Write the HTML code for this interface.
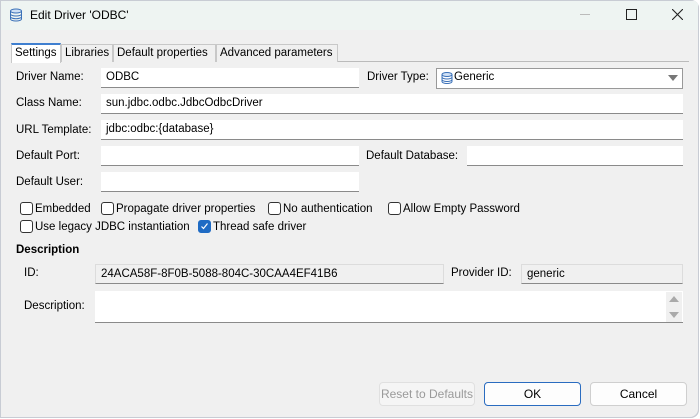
<!DOCTYPE html>
<html><head><meta charset="utf-8"><style>
*{box-sizing:border-box;margin:0;padding:0}
body{width:700px;height:419px;overflow:hidden;background:#fff;font-family:"Liberation Sans",sans-serif;font-size:11.5px;color:#000;position:relative}
.win{position:absolute;left:0;top:0;width:699px;height:418px;background:#f0f0f0;box-shadow:inset -1px -1px 0 #c8ccd4, inset 1px 1px 0 #c8ccd4;border-radius:0 8px 8px 0;overflow:hidden}
.title{position:absolute;left:1px;top:1px;width:697px;height:29px;background:#eef4f2}
.a{position:absolute;white-space:nowrap}
.in{position:absolute;background:#fff;border-bottom:1px solid #8a8a8a;height:20px}
.ro{position:absolute;background:#f0f0f0;border:1px solid #dcdcdc;border-bottom:1px solid #8a8a8a;height:20px;padding:3px 0 0 5px}
.tx{padding:3px 0 0 5px}
.cb{position:absolute;width:13px;height:13px;border:1px solid #333;border-radius:3px;background:#fff}
.tab{position:absolute;top:44px;height:18px;border:1px solid #c8c8c8;border-bottom:none;padding:2px 0 0 3px}
.btn{position:absolute;top:382px;height:24px;border:1px solid #cfcfcf;border-radius:4px;background:#fdfdfd;text-align:center;padding-top:4px;font-size:12px}
</style></head><body>
<div class="win">
<div class="title"></div>
<svg class="a" style="left:9px;top:8px" width="14" height="14" viewBox="0 0 14 14"><ellipse cx="7" cy="3" rx="5.5" ry="2" fill="#cfe0f5" stroke="#3a70b8"/><path d="M1.5 3v8c0 1.1 2.5 2 5.5 2s5.5-.9 5.5-2V3M1.5 6c0 1.1 2.5 2 5.5 2s5.5-.9 5.5-2M1.5 8.7c0 1.1 2.5 2 5.5 2s5.5-.9 5.5-2" fill="none" stroke="#3a70b8"/></svg>
<div class="a" style="left:30px;top:8px;font-size:12px">Edit Driver 'ODBC'</div>
<div class="a" style="left:580px;top:14px;width:10px;height:1px;background:#bbb"></div>
<div class="a" style="left:626px;top:9px;width:11px;height:11px;border:1px solid #222"></div>
<svg class="a" style="left:672px;top:9px" width="11" height="11"><path d="M0 0L11 11M11 0L0 11" stroke="#222" stroke-width="1.1"/></svg>

<div class="a" style="left:338px;top:61px;width:351px;height:1px;background:#bbb"></div>
<div class="tab" style="left:11px;width:50px;background:#fff;border-top:2px solid #3f7fd0;top:43px;height:20px">Settings</div>
<div class="tab" style="left:61px;width:52px">Libraries</div>
<div class="tab" style="left:113px;width:103px">Default properties</div>
<div class="tab" style="left:216px;width:122px">Advanced parameters</div>

<div class="a" style="left:16px;top:71px">Driver Name:</div>
<div class="in tx" style="left:101px;top:68px;width:258px">ODBC</div>
<div class="a" style="left:367px;top:71px">Driver Type:</div>
<div class="a" style="left:436px;top:68px;width:247px;height:21px;background:#fff;border:1px solid #999"></div>
<svg class="a" style="left:441px;top:72px" width="12" height="12" viewBox="0 0 12 12"><ellipse cx="6" cy="2.5" rx="5" ry="2" fill="#cfe0f5" stroke="#3a70b8"/><path d="M1 2.5v7c0 1.1 2.2 2 5 2s5-.9 5-2v-7M1 5c0 1.1 2.2 2 5 2s5-.9 5-2M1 7.5c0 1.1 2.2 2 5 2s5-.9 5-2" fill="none" stroke="#3a70b8"/></svg>
<div class="a" style="left:454px;top:71px">Generic</div>
<svg class="a" style="left:668px;top:75px" width="10" height="6"><path d="M0 0h10L5 6z" fill="#777"/></svg>

<div class="a" style="left:16px;top:97px">Class Name:</div>
<div class="in tx" style="left:101px;top:94px;width:582px">sun.jdbc.odbc.JdbcOdbcDriver</div>
<div class="a" style="left:16px;top:124px">URL Template:</div>
<div class="in tx" style="left:101px;top:120px;width:582px">jdbc:odbc:{database}</div>
<div class="a" style="left:16px;top:150px">Default Port:</div>
<div class="in" style="left:101px;top:146px;width:258px"></div>
<div class="a" style="left:366px;top:150px">Default Database:</div>
<div class="in" style="left:467px;top:146px;width:216px"></div>
<div class="a" style="left:16px;top:176px">Default User:</div>
<div class="in" style="left:101px;top:172px;width:258px"></div>

<div class="cb" style="left:20px;top:202px"></div><div class="a" style="left:35px;top:203px">Embedded</div>
<div class="cb" style="left:101px;top:202px"></div><div class="a" style="left:116px;top:203px">Propagate driver properties</div>
<div class="cb" style="left:268px;top:202px"></div><div class="a" style="left:283px;top:203px">No authentication</div>
<div class="cb" style="left:388px;top:202px"></div><div class="a" style="left:403px;top:203px">Allow Empty Password</div>
<div class="cb" style="left:20px;top:220px"></div><div class="a" style="left:35px;top:221px">Use legacy JDBC instantiation</div>
<div class="cb" style="left:198px;top:220px;background:#1f6bc4;border-color:#1f6bc4"></div>
<svg class="a" style="left:200px;top:222px" width="9" height="9"><path d="M1.5 4.5l2 2 4-5" fill="none" stroke="#fff" stroke-width="1.2"/></svg>
<div class="a" style="left:213px;top:221px">Thread safe driver</div>

<div class="a" style="left:16px;top:244px;font-weight:bold">Description</div>
<div class="a" style="left:24px;top:267px">ID:</div>
<div class="ro" style="left:95px;top:264px;width:349px">24ACA58F-8F0B-5088-804C-30CAA4EF41B6</div>
<div class="a" style="left:451px;top:267px">Provider ID:</div>
<div class="ro" style="left:521px;top:264px;width:162px">generic</div>
<div class="a" style="left:24px;top:300px">Description:</div>
<div class="in" style="left:95px;top:291px;width:588px;height:32px"></div>
<div class="a" style="left:666px;top:292px;width:16px;height:30px;background:#f0f0f0"></div>
<svg class="a" style="left:669px;top:296px" width="10" height="22"><path d="M0 6L5 0L10 6z M0 16h10L5 22z" fill="#aaa"/></svg>

<div class="btn" style="left:379px;width:96px;color:#9a9a9a;background:#f5f5f5;border-color:#e0e0e0">Reset to Defaults</div>
<div class="btn" style="left:484px;width:97px;border-color:#2a6cc0">OK</div>
<div class="btn" style="left:590px;width:97px">Cancel</div>
</div>
</body></html>
